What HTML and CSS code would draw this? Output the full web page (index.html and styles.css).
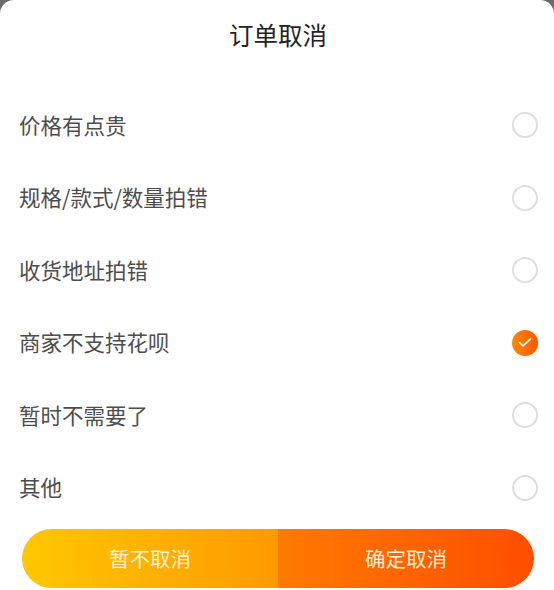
FILE: index.html
```html
<!DOCTYPE html>
<html>
<head>
  <title>订单取消</title>
  <link rel="stylesheet" href="styles.css">
</head>
<body>
  <div class="sheet">
    <h1 class="title">订单取消</h1>

    <div class="reasons">
      <div class="reason"><span>价格有点贵</span><i class="radio"></i></div>
      <div class="reason"><span>规格/款式/数量拍错</span><i class="radio"></i></div>
      <div class="reason"><span>收货地址拍错</span><i class="radio"></i></div>
      <div class="reason"><span>商家不支持花呗</span>
        <i class="radio checked">
          <svg width="14" height="11" viewBox="0 0 14 11"><path d="M1.5 5.6 L5 8.8 L12.5 2" fill="none" stroke="#fff" stroke-width="1.7" stroke-linecap="round" stroke-linejoin="round"/></svg>
        </i>
      </div>
      <div class="reason"><span>暂时不需要了</span><i class="radio"></i></div>
      <div class="reason"><span>其他</span><i class="radio"></i></div>
    </div>

    <div class="buttons">
      <button class="btn btn-keep">暂不取消</button>
      <button class="btn btn-confirm">确定取消</button>
    </div>
  </div>
</body>
</html>
```

FILE: styles.css
```css
html, body {
  margin: 0;
  height: 590px;
  overflow: hidden;
  background-color: #6b6b6b;
}

body {
  font-family: "Noto Sans CJK SC", "Liberation Sans", sans-serif;
}

.sheet {
  height: 590px;
  box-sizing: border-box;
  background-color: #fff;
  border-radius: 14px 14px 0 0;
  padding-top: 17px;
}

.title {
  margin: 0;
  padding-left: 2px;
  height: 36px;
  line-height: 36px;
  font-size: 24.5px;
  font-weight: normal;
  text-align: center;
  color: #222;
}

.reasons {
  margin-top: 36px;
}

.reason {
  display: flex;
  justify-content: space-between;
  align-items: center;
  height: 72.5px;
  padding: 0 16px 0 19px;
  font-size: 21.5px;
  color: #4d4d4d;
}

.reason span {
  margin-top: -2px;
}

.radio {
  display: flex;
  align-items: center;
  justify-content: center;
  width: 26px;
  height: 26px;
  box-sizing: border-box;
  border: 2px solid #dedede;
  border-radius: 50%;
}

.radio.checked {
  border: none;
  background: linear-gradient(to right, #ff8a00, #ff5500);
}

.buttons {
  display: flex;
  margin: 4.5px 20px 0 22px;
  height: 59px;
}

.btn {
  flex: 1;
  border: none;
  padding: 0;
  font-family: inherit;
  font-size: 20.5px;
  color: #fff3dc;
}

.btn-keep {
  border-radius: 30px 0 0 30px;
  background: linear-gradient(to right, #ffc800, #ff9a00);
}

.btn-confirm {
  border-radius: 0 30px 30px 0;
  background: linear-gradient(to right, #ff7a00, #ff4e00);
}
```
